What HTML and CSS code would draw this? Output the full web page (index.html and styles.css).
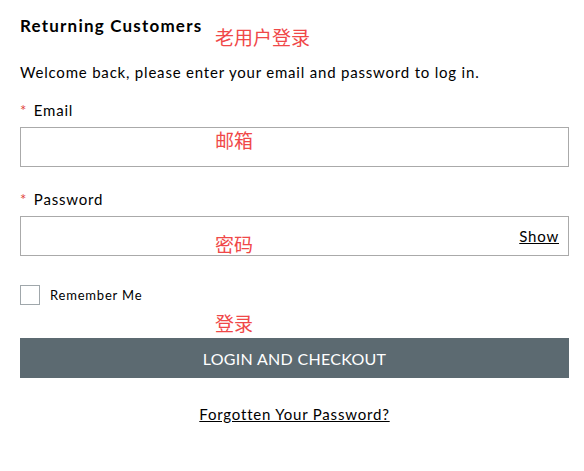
FILE: index.html
```html
<!DOCTYPE html>
<html lang="en">

<head>
    <meta charset="UTF-8">
    <meta name="viewport" content="width=device-width, initial-scale=1.0">
    <title>Returning Customers</title>
    <link rel="stylesheet" href="styles.css">
</head>

<body>
    <div class="container">
        <h2>Returning Customers</h2>
        <p class="intro">Welcome back, please enter your email and password to log in.</p>

        <div class="form-group">
            <label for="email"><span class="req">*</span> Email</label>
            <input type="text" id="email">
        </div>

        <div class="form-group">
            <label for="password"><span class="req">*</span> Password</label>
            <div class="password-box">
                <input type="password" id="password">
                <a href="#" class="show">Show</a>
            </div>
        </div>

        <div class="remember">
            <span class="checkbox"></span>
            <span>Remember Me</span>
        </div>

        <button class="login">LOGIN AND CHECKOUT</button>

        <div class="forgot">
            <a href="#">Forgotten Your Password?</a>
        </div>

        <span class="note note-title">老用户登录</span>
        <span class="note note-email">邮箱</span>
        <span class="note note-password">密码</span>
        <span class="note note-login">登录</span>
    </div>
</body>

</html>
```

FILE: styles.css
```css
body {
    margin: 0;
    font-family: Lato, sans-serif;
    color: #000;
    background-color: white;
}

.container {
    position: relative;
    padding: 15px 15px 0 20px;
    letter-spacing: 0.8px;
}

h2 {
    margin: 0;
    font-size: 17px;
    font-weight: bold;
    line-height: 22px;
    letter-spacing: 1.2px;
}

.intro {
    margin: 25px 0 0;
    font-size: 15px;
    line-height: 20px;
}

.form-group {
    margin-top: 18px;
}

.form-group + .form-group {
    margin-top: 22px;
}

label {
    display: block;
    font-size: 15px;
    line-height: 20px;
    margin-bottom: 7px;
}

.req {
    color: #e0443c;
    margin-right: 2px;
}

input[type="text"],
input[type="password"] {
    display: block;
    width: 100%;
    height: 40px;
    box-sizing: border-box;
    border: 1px solid #aaa;
    border-radius: 0;
    padding: 8px;
    margin: 0;
}

.password-box {
    position: relative;
}

.show {
    position: absolute;
    right: 10px;
    top: 11px;
    font-size: 15px;
    color: #000;
    text-decoration: underline;
}

.remember {
    display: flex;
    align-items: center;
    gap: 10px;
    margin-top: 29px;
    font-size: 13px;
}

.checkbox {
    width: 18px;
    height: 18px;
    border: 1px solid #a0a7ab;
}

.login {
    display: block;
    width: 100%;
    height: 40px;
    margin-top: 33px;
    border: none;
    background-color: #5c6a71;
    color: white;
    font-family: Lato, sans-serif;
    font-size: 16px;
    letter-spacing: 0.3px;
}

.forgot {
    text-align: center;
    margin-top: 27px;
    font-size: 15px;
}

.forgot a {
    color: #000;
    text-decoration: underline;
}

.note {
    position: absolute;
    left: 215px;
    color: #f04848;
    font-family: "Noto Sans CJK SC", sans-serif;
    font-size: 19px;
    line-height: 20px;
    letter-spacing: 0;
}

.note-title {
    top: 27px;
}

.note-email {
    top: 130px;
}

.note-password {
    top: 234px;
}

.note-login {
    top: 313px;
}
```
